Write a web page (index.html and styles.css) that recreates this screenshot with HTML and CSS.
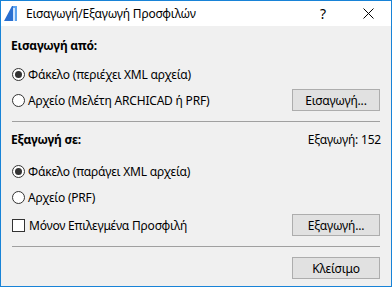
FILE: index.html
```html
<!DOCTYPE html>
<html lang="el">
<head>
  <meta charset="UTF-8" />
  <meta name="viewport" content="width=device-width, initial-scale=1" />
  <title>Εισαγωγή/Εξαγωγή Προσφιλών</title>
  <link rel="stylesheet" href="styles.css">
</head>
<body>
  <div class="dialog">
    <div class="titlebar">
      <svg class="app-icon" width="14" height="15" viewBox="0 0 14 15">
        <polygon points="0,15 8,0 9,0 9,15" fill="#2a6fd0" />
        <polygon points="9,0 13,0 13,15 9,15" fill="#5aa2ee" />
        <polygon points="9,2 11,2 11,15 9,15" fill="#cfe6ff" />
      </svg>
      <span class="title">Εισαγωγή/Εξαγωγή Προσφιλών</span>
      <span class="help">?</span>
      <svg class="close" width="11" height="11" viewBox="0 0 11 11">
        <path d="M0.5 0.5 L10.5 10.5 M10.5 0.5 L0.5 10.5" stroke="#000" stroke-width="1" />
      </svg>
    </div>

    <div class="content">
      <div class="heading">Εισαγωγή από:</div>

      <div class="row row-first">
        <span class="radio checked"></span>
        <span class="label">Φάκελο (περιέχει XML αρχεία)</span>
      </div>
      <div class="row">
        <span class="radio"></span>
        <span class="label">Αρχείο (Μελέτη ARCHICAD ή PRF)</span>
        <button class="btn">Εισαγωγή...</button>
      </div>

      <div class="separator"></div>

      <div class="heading heading-split">
        <span>Εξαγωγή σε:</span>
        <span class="count">Εξαγωγή: 152</span>
      </div>

      <div class="row row-first">
        <span class="radio checked"></span>
        <span class="label">Φάκελο (παράγει XML αρχεία)</span>
      </div>
      <div class="row">
        <span class="radio"></span>
        <span class="label">Αρχείο (PRF)</span>
      </div>
      <div class="row row-check">
        <span class="checkbox"></span>
        <span class="label">Μόνον Επιλεγμένα Προσφιλή</span>
        <button class="btn">Εξαγωγή...</button>
      </div>

      <div class="separator"></div>

      <div class="footer">
        <button class="btn">Κλείσιμο</button>
      </div>
    </div>
  </div>
</body>
</html>
```

FILE: styles.css
```css
body {
  margin: 0;
  padding: 0;
  font-family: "Noto Sans", "DejaVu Sans", sans-serif;
  font-size: 12px;
  letter-spacing: -0.2px;
  color: #000;
  background: #fff;
}

.dialog {
  width: 392px;
  height: 287px;
  box-sizing: border-box;
  border: 1px solid #1883d7;
  background: #f0f0f0;
  display: flex;
  flex-direction: column;
}

.titlebar {
  height: 25px;
  background: #fff;
  display: flex;
  align-items: center;
  padding-left: 3px;
}

.app-icon {
  margin-right: 8px;
}

.title {
  flex: 1;
}

.help {
  font-size: 14px;
  margin-right: 37px;
}

.close {
  margin-right: 17px;
}

.content {
  padding: 10px 10px 0 10px;
  display: flex;
  flex-direction: column;
}

.heading {
  height: 20px;
  line-height: 20px;
  font-weight: 700;
}

.heading-split {
  display: flex;
  justify-content: space-between;
  margin-top: 8px;
}

.heading-split .count {
  font-weight: 400;
}

.row {
  height: 22px;
  display: flex;
  align-items: center;
  margin-top: 4px;
}

.row-first {
  margin-top: 7px;
}

.row-check {
  margin-top: 6px;
}

.content .heading-split + .row-first {
  margin-top: 10px;
}

.label {
  flex: 1;
  margin-left: 3px;
}

.radio {
  width: 11px;
  height: 11px;
  border: 1px solid #333;
  border-radius: 50%;
  background: #fff;
  margin-left: 1px;
  position: relative;
}

.radio.checked::after {
  content: "";
  position: absolute;
  left: 2px;
  top: 2px;
  width: 7px;
  height: 7px;
  border-radius: 50%;
  background: #333;
}

.checkbox {
  width: 11px;
  height: 11px;
  border: 1px solid #333;
  background: #fff;
  margin-left: 1px;
  margin-right: 1px;
}

.btn {
  width: 88px;
  height: 22px;
  border: 1px solid #adadad;
  background: #e1e1e1;
  font-family: inherit;
  font-size: 12px;
  letter-spacing: -0.2px;
  color: #000;
  padding: 0;
  margin-right: 1px;
}

.separator {
  height: 1px;
  background: #a0a0a0;
  margin: 10px 1px 0 1px;
}

.footer {
  display: flex;
  justify-content: flex-end;
  margin-top: 10px;
}
```
